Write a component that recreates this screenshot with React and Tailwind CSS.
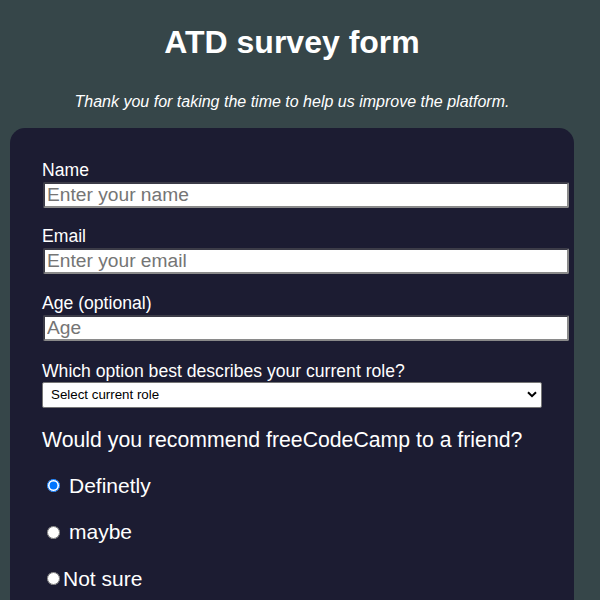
import React from "react";

const font = { fontFamily: '"Liberation Sans", Arial, sans-serif' };

function Field({ label, placeholder, type = "text", first, mt }) {
  return (
    <div className={first ? "" : mt}>
      <label className="block text-[17.6px] leading-[20px] text-white">{label}</label>
      <input
        type={type}
        placeholder={placeholder}
        className="mt-[1.5px] ml-px block h-[26px] w-[526px] rounded-[2px] border-2 border-t-[#3c3c48] border-l-[#3c3c48] border-b-[#8a8a8a] border-r-[#8a8a8a] bg-white px-[2px] text-[19.2px] leading-[22px] text-black placeholder:text-[#757575] outline-none"
      />
    </div>
  );
}

function Radio({ label, checked, gap, first }) {
  return (
    <label className={`flex h-[24px] items-center text-[21px] leading-[24px] text-white ${first ? "mt-[22px]" : "mt-[22.5px]"}`}>
      <input
        type="radio"
        name="recommend"
        defaultChecked={checked}
        className="ml-[5px] mr-[3px] h-[13px] w-[13px]"
      />
      <span className={gap ? "pl-[6px]" : ""}>{label}</span>
    </label>
  );
}

export default function App() {
  return (
    <div className="min-h-[600px] w-full bg-[#364649]" style={font}>
      <div className="w-[584px] pb-[40px]">
        <h1 className="pt-[24px] text-center text-[32px] font-bold leading-[37px] text-white">
          ATD survey form
        </h1>
        <p className="mt-[32px] text-center text-[16px] italic leading-[18px] text-white">
          Thank you for taking the time to help us improve the platform.
        </p>
        <form className="mx-[10px] mt-[17px] rounded-[15px] bg-[#1c1c32] px-[32px] pt-[32px] pb-[60px]">
          <Field first label="Name" placeholder="Enter your name" />
          <Field mt="mt-[18.5px]" label="Email" placeholder="Enter your email" type="email" />
          <Field mt="mt-[19.5px]" label="Age (optional)" placeholder="Age" type="number" />
          <div className="mt-[20px]">
            <label className="block text-[17.6px] leading-[20px] text-white">
              Which option best describes your current role?
            </label>
            <div className="relative mt-[1.5px] h-[26px] w-[500px]">
              <select className="block h-[26px] w-[500px] appearance-none rounded-[2px] border border-[#767676] bg-white pl-[8px] text-[13.33px] text-black outline-none">
                <option>Select current role</option>
                <option>Student</option>
                <option>Full Time Job</option>
                <option>Full Time Learner</option>
                <option>Prefer not to say</option>
                <option>Other</option>
              </select>
              <svg
                className="pointer-events-none absolute left-[485px] top-[9px]"
                width="10"
                height="7"
                viewBox="0 0 10 7"
              >
                <path d="M1 1.2 L5 5.2 L9 1.2" fill="none" stroke="#000" strokeWidth="2" />
              </svg>
            </div>
          </div>
          <p className="mt-[19.5px] text-[21.25px] leading-[24px] text-white">
            Would you recommend freeCodeCamp to a friend?
          </p>
          <Radio first checked gap label="Definetly" />
          <Radio gap label="maybe" />
          <Radio label="Not sure" />
        </form>
      </div>
    </div>
  );
}
